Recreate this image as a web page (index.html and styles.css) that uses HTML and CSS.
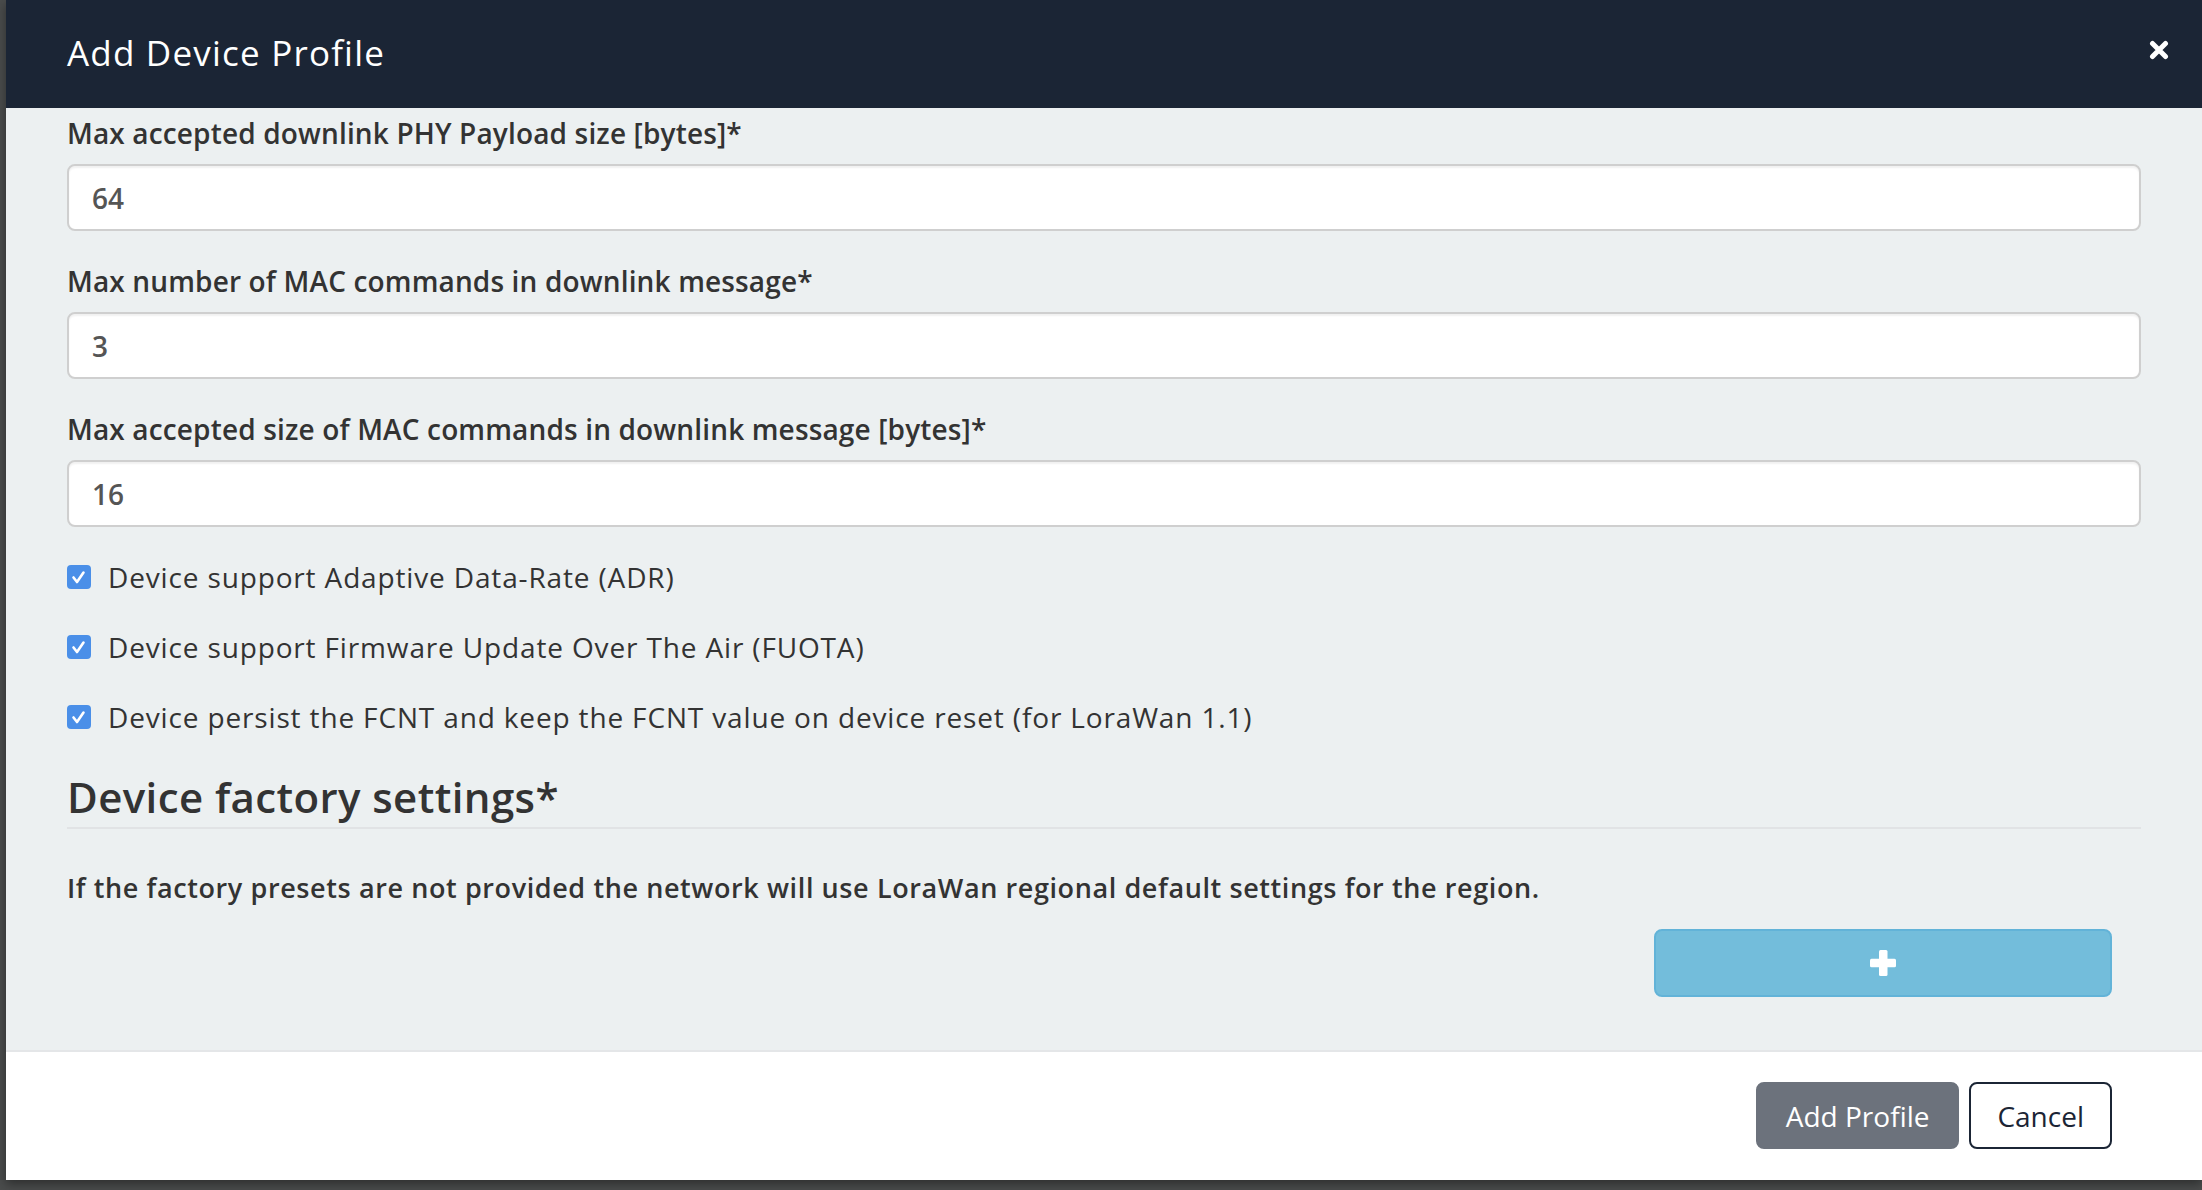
FILE: index.html
```html
<!DOCTYPE html>
<html lang="en">
<head>
<meta charset="utf-8">
<title>Add Device Profile</title>
<link rel="stylesheet" href="styles.css">
</head>
<body>
<div class="modal">
  <header class="modal-header">
    <h1 class="modal-title">Add Device Profile</h1>
    <button class="close" type="button" aria-label="Close">
      <svg width="20" height="20" viewBox="0 0 20 20"><path d="M3.5 3.5 L16.5 16.5 M16.5 3.5 L3.5 16.5" stroke="#fff" stroke-width="5" stroke-linecap="round"/></svg>
    </button>
  </header>
  <main class="modal-body">
    <div class="field">
      <label class="field-label">Max accepted downlink PHY Payload size [bytes]*</label>
      <div class="input">64</div>
    </div>
    <div class="field">
      <label class="field-label">Max number of MAC commands in downlink message*</label>
      <div class="input">3</div>
    </div>
    <div class="field">
      <label class="field-label">Max accepted size of MAC commands in downlink message [bytes]*</label>
      <div class="input">16</div>
    </div>
    <div class="checks">
      <label class="check"><span class="box"><svg width="24" height="24" viewBox="0 0 24 24"><path d="M6.5 12.5 L10 17 L16.5 7.5" fill="none" stroke="#fff" stroke-width="2.6" stroke-linecap="round" stroke-linejoin="round"/></svg></span>Device support Adaptive Data-Rate (ADR)</label>
      <label class="check"><span class="box"><svg width="24" height="24" viewBox="0 0 24 24"><path d="M6.5 12.5 L10 17 L16.5 7.5" fill="none" stroke="#fff" stroke-width="2.6" stroke-linecap="round" stroke-linejoin="round"/></svg></span>Device support Firmware Update Over The Air (FUOTA)</label>
      <label class="check"><span class="box"><svg width="24" height="24" viewBox="0 0 24 24"><path d="M6.5 12.5 L10 17 L16.5 7.5" fill="none" stroke="#fff" stroke-width="2.6" stroke-linecap="round" stroke-linejoin="round"/></svg></span>Device persist the FCNT and keep the FCNT value on device reset (for LoraWan 1.1)</label>
    </div>
    <h2 class="section-title">Device factory settings*</h2>
    <p class="note">If the factory presets are not provided the network will use LoraWan regional default settings for the region.</p>
    <div class="add-row">
      <button class="btn-add" type="button" aria-label="Add">
        <svg width="26" height="26" viewBox="0 0 26 26"><rect x="9" y="0" width="8.5" height="26" rx="1.5" fill="#fff"/><rect x="0" y="8.8" width="26" height="8.5" rx="1.5" fill="#fff"/></svg>
      </button>
    </div>
  </main>
  <footer class="modal-footer">
    <button class="btn btn-primary" type="button">Add Profile</button>
    <button class="btn btn-outline" type="button">Cancel</button>
  </footer>
</div>
</body>
</html>
```

FILE: styles.css
```css
* { box-sizing: border-box; }
html, body {
  margin: 0;
  padding: 0;
  height: 100%;
}
body {
  background: #4a4c4c;
  font-family: "Open Sans", "Liberation Sans", sans-serif;
  color: #333;
  overflow: hidden;
}
.modal {
  margin-left: 6px;
  height: 1180px;
  display: flex;
  flex-direction: column;
  background: #fff;
  box-shadow: 0 4px 10px rgba(0,0,0,0.4);
}
.modal-header {
  height: 108px;
  flex: none;
  background: #1b2535;
  display: flex;
  align-items: center;
  padding: 0 33px 3px 61px;
}
.modal-title {
  margin: 0;
  font-size: 35px;
  font-weight: 400;
  line-height: 1.2;
  color: #fff;
  letter-spacing: 1.2px;
}
.close {
  margin-left: auto;
  margin-bottom: 6px;
  background: none;
  border: 0;
  padding: 0;
  width: 20px;
  height: 20px;
  display: flex;
}
.modal-body {
  flex: 1;
  background: #ecf0f1;
  padding: 8px 61px 0 61px;
}
.field { margin-bottom: 33px; }
.field-label {
  display: block;
  font-size: 28px;
  line-height: 34px;
  font-weight: 600;
  color: #333;
  margin-bottom: 14px;
  letter-spacing: 0.15px;
}
.input {
  height: 67px;
  background: #fff;
  border: 2px solid #cfcfcf;
  border-radius: 8px;
  box-shadow: inset 0 2px 2px rgba(0,0,0,0.06);
  padding: 0 23px;
  display: flex;
  align-items: center;
  font-size: 28px;
  font-weight: 600;
  color: #555;
}
.checks {
  display: flex;
  flex-direction: column;
  gap: 36px;
  margin-top: 1px;
}
.check {
  display: flex;
  align-items: center;
  font-size: 28px;
  line-height: 34px;
  font-weight: 400;
  color: #333;
  letter-spacing: 0.85px;
}
.box {
  width: 24px;
  height: 24px;
  border-radius: 4px;
  background: #4a8fe8;
  margin: 0 17px 0 0;
  display: flex;
  flex: none;
}
.section-title {
  margin: 38px 0 0 0;
  font-size: 42px;
  line-height: 50px;
  font-weight: 600;
  color: #333;
  padding-bottom: 5px;
  border-bottom: 2px solid #e1e3e5;
  letter-spacing: 0.4px;
}
.note {
  margin: 42px 0 0 0;
  font-size: 27px;
  line-height: 34px;
  font-weight: 600;
  color: #333;
  letter-spacing: 0.6px;
}
.add-row {
  display: flex;
  justify-content: flex-end;
  margin-top: 24px;
  padding-right: 29px;
}
.btn-add {
  width: 458px;
  height: 68px;
  background: #73bddb;
  border: 2px solid #62b3d8;
  border-radius: 8px;
  display: flex;
  align-items: center;
  justify-content: center;
  padding: 0;
}
.modal-footer {
  flex: none;
  height: 130px;
  background: #fff;
  border-top: 2px solid #e4e6e8;
  display: flex;
  justify-content: flex-end;
  align-items: flex-start;
  gap: 10px;
  padding: 30px 90px 0 0;
}
.btn {
  height: 67px;
  border-radius: 8px;
  font-family: "Open Sans", "Liberation Sans", sans-serif;
  font-size: 28px;
  font-weight: 400;
  padding: 0 26px;
}
.btn-primary {
  background: #6c727c;
  border: 2px solid #6c727c;
  color: #fff;
  padding: 0 28px;
}
.btn-outline {
  background: #fff;
  border: 2px solid #1b2535;
  color: #1b2535;
}
```
